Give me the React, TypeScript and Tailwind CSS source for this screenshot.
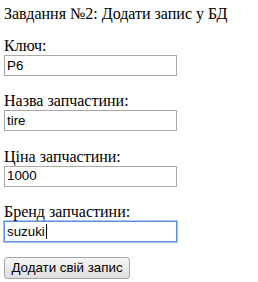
import React from "react";

const serif = { fontFamily: '"Liberation Serif", "Times New Roman", serif' };

function Field({ label, value, focused, last }: { label: string; value: string; focused?: boolean; last?: boolean }) {
  return (
    <div className={last ? "" : "mb-[15.33px]"}>
      <div className="h-[19px] leading-[19px] text-[16px] text-black" style={serif}>
        {label}
      </div>
      <div
        className={
          "flex h-[21px] w-[173px] items-center bg-white pl-[2px] text-[13.33px] text-black font-['Liberation_Sans',Arial,sans-serif] " +
          (focused
            ? "border border-[#5f8de6] shadow-[0_0_0_1px_#a9c3f2]"
            : "border border-[#a9a9a9]")
        }
      >
        <span>{value}</span>
        {focused && <span className="ml-[1px] inline-block h-[15px] w-[1px] bg-black" />}
      </div>
    </div>
  );
}

export default function App() {
  return (
    <div className="min-h-[282px] w-[258px] bg-white px-[4px] pt-[4px]">
      <div className="mb-[13px] h-[19px] leading-[19px] text-[16px] text-black whitespace-nowrap" style={serif}>
        Завдання №2: Додати запис у БД
      </div>
      <Field label="Ключ:" value="P6" />
      <Field label="Назва запчастини:" value="tire" />
      <Field label="Ціна запчастини:" value="1000" />
      <Field label="Бренд запчастини:" value="suzuki" focused />
      <div className="mt-[15px]">
        <button className="flex h-[22px] w-[126px] items-center justify-center rounded-[3px] border border-[#a6a6a6] bg-gradient-to-b from-[#f6f6f6] to-[#dedede] text-[13.33px] text-black font-['Liberation_Sans',Arial,sans-serif]">
          Додати свій запис
        </button>
      </div>
    </div>
  );
}
